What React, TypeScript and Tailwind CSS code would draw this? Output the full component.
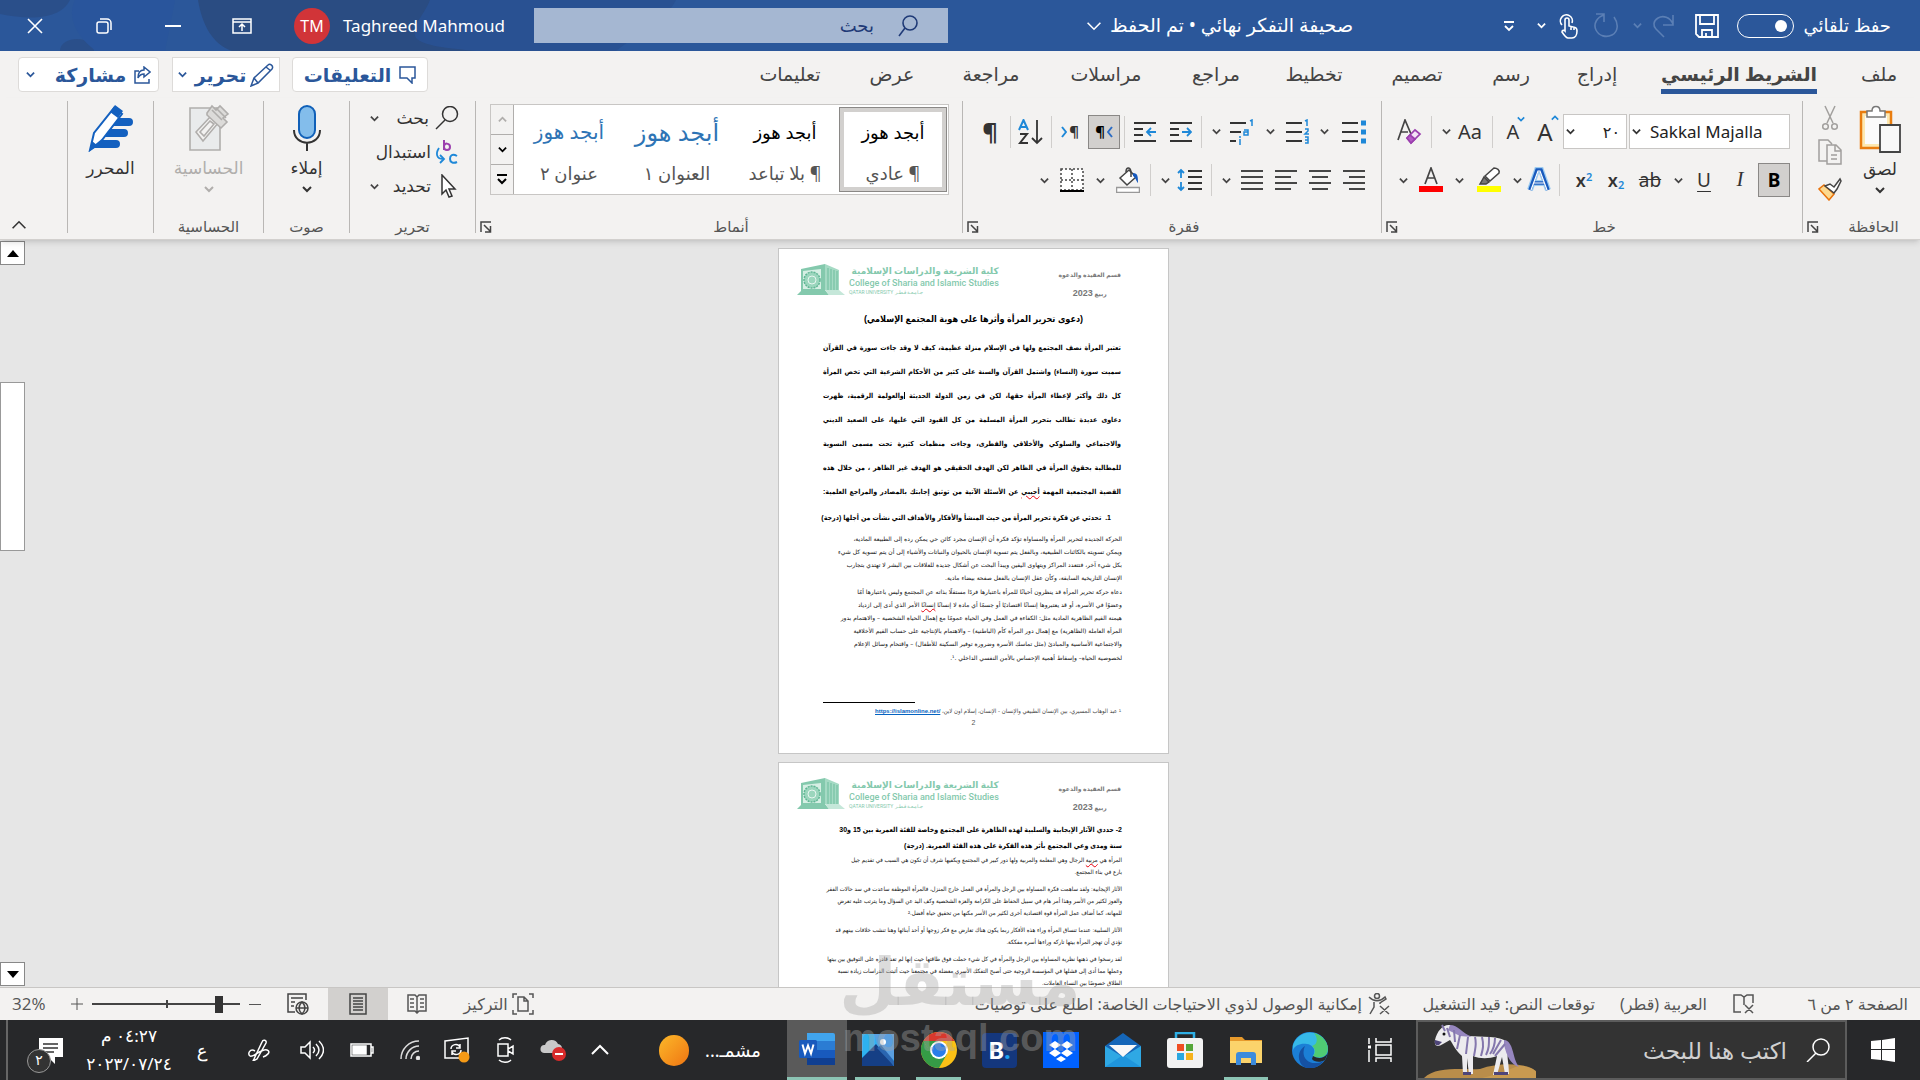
import type { ReactNode } from 'react';

const tabs = [
  { label: 'ملف', width: 'w-[82px]' },
  { label: 'الشريط الرئيسي', width: 'w-[198px]', active: true },
  { label: 'إدراج', width: 'w-[86px]' },
  { label: 'رسم', width: 'w-[86px]' },
  { label: 'تصميم', width: 'w-[102px]' },
  { label: 'تخطيط', width: 'w-[104px]' },
  { label: 'مراجع', width: 'w-[92px]' },
  { label: 'مراسلات', width: 'w-[128px]' },
  { label: 'مراجعة', width: 'w-[102px]' },
  { label: 'عرض', width: 'w-[96px]' },
  { label: 'تعليمات', width: 'w-[108px]' },
];

const gallery = [
  { name: '¶ عادي', preview: 'text-black text-[18px]', selected: true },
  { name: '¶ بلا تباعد', preview: 'text-black text-[18px]' },
  { name: 'العنوان ١', preview: 'text-[#2e74b5] text-[24px]' },
  { name: 'عنوان ٢', preview: 'text-[#2e74b5] text-[20px]' },
];

function Chevron({ className = 'text-[#444]', size = 9, thin }: { className?: string; size?: number; thin?: boolean }) {
  return (
    <svg className={className} width={size} height={size} viewBox="0 0 10 10" fill="none" stroke="currentColor" strokeWidth={thin ? 1 : 2}>
      <path d="M1 3l4 4 4-4" />
    </svg>
  );
}

function Tool({ label, width = 'w-8', children }: { label: string; width?: string; children: ReactNode }) {
  return (
    <button aria-label={label} className={`${width} h-[34px] shrink-0 flex items-center justify-center`}>
      {children}
    </button>
  );
}

function More({ width = 'w-4' }: { width?: string }) {
  return <Tool label="خيارات إضافية" width={width}><Chevron /></Tool>;
}

function Sep({ className = 'mx-1.5' }: { className?: string }) {
  return <span className={`w-px h-8 shrink-0 bg-[#d0cecc] ${className}`} />;
}

function Launcher() {
  return (
    <button aria-label="إعدادات" className="absolute left-1 bottom-0">
      <svg width="12" height="12" viewBox="0 0 12 12" fill="none" stroke="#444" strokeWidth="1.5">
        <path d="M1 11V1h10M4 4l6 6M10.500 5v6H5" />
      </svg>
    </button>
  );
}

function Group({ label, width, launcher, children }: { label: string; width: string; launcher?: boolean; children: ReactNode }) {
  return (
    <section className={`${width} relative shrink-0 flex flex-col border-l border-[#b9b7b5]`}>
      <div className="flex-1">{children}</div>
      <div className={`h-[14px] flex items-center justify-center text-[15px] leading-[14px] text-[#555] ${launcher ? 'pl-6' : ''}`}>
        {label}
      </div>
      {launcher && <Launcher />}
    </section>
  );
}

function Lines({ widths, align }: { widths: number[]; align: 'start' | 'mid' | 'end' }) {
  return (
    <svg width="22" height="22" viewBox="0 0 22 22" stroke="#333" strokeWidth="1.800">
      {widths.map((w, i) => {
        const x = align === 'start' ? 0 : align === 'end' ? 22 - w : (22 - w) / 2;
        return <path key={i} d={`M${x} ${2 + i * 6}h${w}`} />;
      })}
    </svg>
  );
}

function TitleBar() {
  return (
    <header className="relative h-[51px] shrink-0 bg-[#2b579a] text-white">
      <svg className="absolute left-0 top-0" width="720" height="51" viewBox="0 0 720 51" preserveAspectRatio="none">
        <path d="M198 0c4 24 14 44 34 51h330c50-8 30-34 48-51z" fill="#2a4c82" />
        <path d="M430 0c-6 16-20 26-14 38 8 8 30 10 60 13h140c20-16 50-30 60-51z" fill="#295192" />
        <path d="M60 51c0-16 34-16 34 0zM0 0h70c-10 20-40 20-70 14z" fill="#2a4f8a" />
        <path d="M75 0h100l-10 51H96C78 38 66 18 75 0z" fill="#29559c" />
      </svg>
      <div className="relative h-full flex items-center pr-[29px]">
        <label htmlFor="autosave" className="w-[88px] text-[18px] whitespace-nowrap">حفظ تلقائي</label>
        <input
          id="autosave"
          type="checkbox"
          className="mr-[9px] appearance-none w-[57px] h-6 rounded-full border border-white flex items-center px-1.5 before:block before:w-3 before:h-3 before:rounded-full before:bg-white"
        />
        <button aria-label="حفظ" className="mr-[18px]">
          <svg width="24" height="24" viewBox="0 0 24 24" fill="none" stroke="#fff" strokeWidth="1.800">
            <path d="M1 1h22v22H4l-3-3zM5 1v9h14V1M7 23v-7h10v7M11 19v4" />
          </svg>
        </button>
        <button aria-label="تراجع" className="mr-[19px]">
          <svg width="24" height="24" viewBox="0 0 24 24" fill="none" stroke="#5b7fb5" strokeWidth="1.600">
            <path d="M21 1v10H11M21 10C18 3 11 1 6 4s-5 8-2 11l8 8" />
          </svg>
        </button>
        <button aria-label="خيارات التراجع" className="mr-[10px]"><Chevron className="text-[#5b7fb5]" /></button>
        <button aria-label="تكرار" className="mr-[14px]">
          <svg width="26" height="26" viewBox="0 0 26 26" fill="none" stroke="#5b7fb5" strokeWidth="1.600">
            <path d="M3 1h8v8M11 2C4 4 0 11 3 17s10 8 16 5 7-11 2-18" />
          </svg>
        </button>
        <button aria-label="وضع اللمس" className="mr-[14px]">
          <svg width="20" height="26" viewBox="0 0 20 26" fill="none" stroke="#fff" strokeWidth="1.600">
            <path d="M3 12a6 6 0 1 1 10-2" />
            <path d="M6 18V7a2 2 0 0 1 4 0v6l6 1.500c2 .5 2 2 2 3.500 0 4-2 7-5 7H9c-2 0-4-3-6-6 0-2 2-2 3-1zM12 14v3M15 15v2" />
          </svg>
        </button>
        <button aria-label="خيارات اللمس" className="mr-[13px]"><Chevron className="text-white" /></button>
        <button aria-label="تخصيص شريط الأدوات" className="mr-[22px]">
          <svg width="12" height="12" viewBox="0 0 12 12" fill="none" stroke="#fff" strokeWidth="1.800">
            <path d="M1 2h10M2 6l4 4 4-4" />
          </svg>
        </button>
        <div className="flex-1 flex items-center justify-center gap-2 pr-3 text-[19px]">
          <span className="whitespace-nowrap">صحيفة التفكر نهائي • تم الحفظ</span>
          <Chevron className="text-white" size={16} thin />
        </div>
        <div className="w-[414px] h-[35px] shrink-0 bg-[#a5b7d2] flex items-center pr-[30px] gap-[24px]">
          <svg width="20" height="22" viewBox="0 0 20 22" fill="none" stroke="#1f3a77" strokeWidth="1.600">
            <circle cx="12" cy="8" r="7" /><path d="M7 13l-6 8" />
          </svg>
          <input aria-label="بحث" placeholder="بحث" className="flex-1 min-w-0 bg-transparent text-[18px] outline-none placeholder:text-[#1f3a77]" />
        </div>
        <span dir="ltr" className="w-[191px] text-[17px] whitespace-nowrap">Taghreed Mahmoud</span>
        <span className="w-9 h-9 ml-[18px] mr-[13px] rounded-full bg-[#d13438] flex items-center justify-center text-[16px]">TM</span>
        <div className="flex h-full">
          <button aria-label="خيارات عرض الشريط" className="w-[69px] flex items-center justify-center">
            <svg width="20" height="16" viewBox="0 0 20 16" fill="none" stroke="#fff" strokeWidth="1.500">
              <path d="M1 1h18v14H1zM1 4h18M10 13V7M7 9l3-3 3 3" />
            </svg>
          </button>
          <button aria-label="تصغير" className="w-[69px] flex items-center justify-center">
            <span className="w-4 h-0.5 bg-white" />
          </button>
          <button aria-label="استعادة" className="w-[69px] flex items-center justify-center">
            <svg width="16" height="16" viewBox="0 0 16 16" fill="none" stroke="#fff" strokeWidth="1.500">
              <rect x="1" y="4" width="11" height="11" rx="2" /><path d="M4 1h7a4 4 0 0 1 4 4v7" />
            </svg>
          </button>
          <button aria-label="إغلاق" className="w-[69px] flex items-center justify-center">
            <svg width="16" height="16" viewBox="0 0 16 16" stroke="#fff" strokeWidth="1.600"><path d="M1 1l14 14M15 1L1 15" /></svg>
          </button>
        </div>
      </div>
    </header>
  );
}

function TabRow() {
  return (
    <div className="h-[47px] shrink-0 flex items-center">
      <nav className="flex">
        {tabs.map((t) => (
          <a key={t.label} href="#" className={`${t.width} flex justify-center whitespace-nowrap text-[#444]`}>
            <span className={`h-[38px] pt-0.5 text-[19px] leading-8 ${t.active ? 'border-b-[5px] border-[#2b579a] font-bold' : ''}`}>
              {t.label}
            </span>
          </a>
        ))}
      </nav>
      <div className="mr-auto pl-[18px] flex items-center text-[19px] leading-7 font-bold text-[#2b579a]">
        <button className="w-[136px] h-[35px] rounded border border-[#dddbd9] bg-white flex items-center justify-center gap-2">
          <svg width="17" height="18" viewBox="0 0 17 18" fill="none" stroke="currentColor" strokeWidth="1.500">
            <path d="M1 1h15v11h-3v5l-5-5H1z" />
          </svg>
          التعليقات
        </button>
        <button className="w-[108px] h-[35px] mr-3 border border-[#dddbd9] bg-white flex items-center justify-center gap-1">
          <svg width="24" height="24" viewBox="0 0 24 24" fill="none" stroke="currentColor" strokeWidth="1.500">
            <path d="M1 23l3-8L18 2c2-2 6 1 4 4L8 20zM4 15l4 5M16 4l5 4" />
          </svg>
          تحرير
          <Chevron className="mr-1" />
        </button>
        <button className="w-[141px] h-[35px] mr-[13px] rounded border border-[#dddbd9] bg-white flex items-center justify-center gap-2">
          <svg width="17" height="18" viewBox="0 0 17 18" fill="none" stroke="currentColor" strokeWidth="1.500">
            <path d="M5 5H1v12h14v-4M10 1l6 5-6 5V8C6 8 5 10 4 12c0-5 2-8 6-8z" />
          </svg>
          مشاركة
          <Chevron className="mr-3" />
        </button>
      </div>
    </div>
  );
}

function ClipboardGroup() {
  return (
    <Group label="الحافظة" width="w-[118px]" launcher>
      <div className="flex pr-[18px] pt-1">
        <button className="w-11 flex flex-col items-center text-[17px] text-[#333]">
          <svg width="42" height="48" viewBox="0 0 42 48" fill="none">
            <path d="M2 7h30v36H2z" fill="#fde8b0" stroke="#e97d0f" strokeWidth="2.500" />
            <path d="M6 11h22v28H6z" fill="#fbfbfb" />
            <path d="M8 12V6h5c0-6 8-6 8 0h5v6z" fill="#fff" stroke="#777" strokeWidth="1.500" />
            <path d="M21 20h20v27H21z" fill="#f8f8f8" stroke="#444" strokeWidth="1.800" />
          </svg>
          <span className="leading-6 pt-1">لصق</span>
          <Chevron className="mt-1" size={10} />
        </button>
        <div className="mr-4 flex flex-col gap-2 items-center">
          <button aria-label="قص">
            <svg width="16" height="26" viewBox="0 0 16 26" fill="none" stroke="#a19f9d" strokeWidth="1.500">
              <path d="M3 1l8 17M13 1L5 18" /><circle cx="3.500" cy="21.500" r="2.800" /><circle cx="12.500" cy="21.500" r="2.800" />
            </svg>
          </button>
          <button aria-label="نسخ">
            <svg width="24" height="26" viewBox="0 0 24 26" fill="none" stroke="#a19f9d" strokeWidth="1.500">
              <path d="M9 22H1V1h9l4 4M9 6h9l5 5v14H9zM17 6v6h6M13 16h6M13 20h6" />
            </svg>
          </button>
          <button aria-label="نسخ التنسيق" className="mt-1">
            <svg width="24" height="24" viewBox="0 0 24 24" fill="none" stroke="#444" strokeWidth="1.500">
              <path d="M1 12l10 11 5-6-10-9z" fill="#fcd98f" stroke="#e9730c" /><path d="M7 9l5-2 4 3 6-8 1 2-4 8-3 4z" fill="#fff" />
            </svg>
          </button>
        </div>
      </div>
    </Group>
  );
}

function FontGroup() {
  return (
    <Group label="خط" width="w-[421px]" launcher>
      <div className="pr-3 pt-[13px] flex flex-col gap-[14px] text-[#333]">
        <div className="flex items-center h-[35px]">
          <div className="relative w-[161px] h-[35px]" dir="ltr">
            <select aria-label="الخط" className="appearance-none w-full h-full bg-white border border-[#c8c6c4] pl-5 text-[17px] text-[#222] font-['Noto_Sans']">
              <option>Sakkal Majalla</option>
            </select>
            <Chevron className="absolute left-[3px] top-[13px]" />
          </div>
          <div className="relative w-[64px] h-[35px] mr-0.5">
            <select aria-label="حجم الخط" className="appearance-none w-full h-full bg-white border border-[#c8c6c4] pr-1.5 text-[16px] text-[#222]">
              <option>٢٠</option>
            </select>
            <Chevron className="absolute left-[3px] top-[13px]" />
          </div>
          <Tool label="تكبير الخط" width="w-9">
            <span className="relative text-[24px]">A<Chevron className="absolute -right-1.5 top-0 rotate-180 text-[#1e88d8]" size={8} /></span>
          </Tool>
          <Tool label="تصغير الخط" width="w-7">
            <span className="relative text-[20px]">A<Chevron className="absolute -right-1.5 -top-0.5 text-[#1e88d8]" size={8} /></span>
          </Tool>
          <Sep />
          <Tool label="تغيير حالة الأحرف"><span className="text-[20px]">Aa</span></Tool>
          <More />
          <Sep />
          <Tool label="مسح التنسيق">
            <svg width="26" height="26" viewBox="0 0 26 26" fill="none" stroke="#444" strokeWidth="1.700">
              <path d="M2 21L9 1l6 14M5 13h7" /><path d="M11 19l8-8 5 4-9 9z" fill="#f4e3f6" stroke="#9b3fae" /><path d="M11 19l3-3 5 4-4 4z" fill="#b55cc6" stroke="#9b3fae" />
            </svg>
          </Tool>
        </div>
        <div className="flex items-center">
          <button aria-label="غامق" className="w-8 h-[34px] border border-[#8a8886] bg-[#d2d0ce] font-bold text-[19px] text-black leading-none">B</button>
          <Tool label="مائل" width="w-9"><span className="font-['Liberation_Serif'] italic text-[21px]">I</span></Tool>
          <Tool label="تسطير" width="w-9"><span className="underline underline-offset-4 decoration-1 text-[19px]">U</span></Tool>
          <More />
          <Tool label="يتوسطه خط" width="w-10"><span className="line-through text-[19px]">ab</span></Tool>
          <Tool label="منخفض" width="w-7"><span dir="ltr" className="text-[18px] font-semibold">x<sub className="text-[11px] text-[#1e88d8]">2</sub></span></Tool>
          <Tool label="مرتفع" width="w-9"><span dir="ltr" className="text-[18px] font-semibold">x<sup className="text-[11px] text-[#1e88d8]">2</sup></span></Tool>
          <Sep />
          <Tool label="تأثيرات النص" width="w-7">
            <svg width="24" height="26" viewBox="0 0 24 26" fill="none">
              <path d="M3 23L10 3h4l7 20M7 16h10" stroke="#9ccbf0" strokeWidth="6" />
              <path d="M3 23L10 3h4l7 20M7 16h10" stroke="#185abd" strokeWidth="3.500" />
              <path d="M4 23L11 4h2l7 19M7 16h10" stroke="#fff" strokeWidth="1.200" />
            </svg>
          </Tool>
          <More />
          <Tool label="لون تمييز النص" width="w-10">
            <svg width="24" height="26" viewBox="0 0 24 26" fill="none" stroke="#444" strokeWidth="1.500">
              <path d="M0 19h24v6H0z" fill="#ff0" stroke="none" /><path d="M3 17l4-7 5 5-3 2z" fill="#777" /><path d="M8 9l9-8c3 0 6 2 5 5l-9 8z" fill="#fff" />
            </svg>
          </Tool>
          <More width="w-5" />
          <Tool label="لون الخط" width="w-9">
            <svg width="24" height="26" viewBox="0 0 24 26" fill="none" stroke="#444" strokeWidth="1.700">
              <path d="M0 19h24v6H0z" fill="#f00" stroke="none" /><path d="M6 17L12 1l6 16M8 11h8" />
            </svg>
          </Tool>
          <More width="w-5" />
        </div>
      </div>
    </Group>
  );
}

function ParagraphGroup() {
  return (
    <Group label="فقرة" width="w-[419px]" launcher>
      <div className="pr-[11px] pt-[13px] flex flex-col gap-[14px] text-[#333]">
        <div className="flex items-center h-[35px]">
          <Tool label="تعداد نقطي">
            <svg width="24" height="24" viewBox="0 0 24 24" stroke="#333" strokeWidth="1.800">
              <path d="M0 3h16M0 12h16M0 21h16" /><path d="M19 3h5M19 12h5M19 21h5" stroke="#1e88d8" strokeWidth="5" />
            </svg>
          </Tool>
          <More width="w-7" />
          <Tool label="ترقيم" width="w-6">
            <svg width="24" height="26" viewBox="0 0 24 26" stroke="#333" strokeWidth="1.800">
              <path d="M0 4h16M0 13h16M0 22h16" />
              <path d="M19 2l2-1v6M19 10h3v2l-3 3h4M19 18h3v6h-3M19 21h3" stroke="#1e88d8" strokeWidth="1.500" fill="none" />
            </svg>
          </Tool>
          <More width="w-8" />
          <Tool label="قائمة متعددة المستويات" width="w-6">
            <svg width="24" height="26" viewBox="0 0 24 26" stroke="#333" strokeWidth="1.800">
              <path d="M0 4h16M0 13h11M0 22h6" />
              <path d="M20 2l2-1v6M14 11h4v5h-4v-3h4M10 20v6M10 17v2" stroke="#1e88d8" strokeWidth="1.500" fill="none" />
            </svg>
          </Tool>
          <More width="w-7" />
          <Sep className="mx-0" />
          <Tool label="زيادة المسافة" width="w-10">
            <svg width="22" height="22" viewBox="0 0 22 22" fill="none" stroke="#333" strokeWidth="1.800">
              <path d="M0 2h22M0 8h9M0 14h9M0 20h22" /><path d="M12 11h9M17 7l4 4-4 4" stroke="#1e88d8" />
            </svg>
          </Tool>
          <Tool label="إنقاص المسافة">
            <svg width="22" height="22" viewBox="0 0 22 22" fill="none" stroke="#333" strokeWidth="1.800">
              <path d="M0 2h22M0 8h9M0 14h9M0 20h22" /><path d="M22 11h-9M17 7l-4 4 4 4" stroke="#1e88d8" />
            </svg>
          </Tool>
          <Sep className="mx-1" />
          <button dir="ltr" aria-label="من اليمين إلى اليسار" className="w-8 h-[34px] border border-[#8a8886] bg-[#d2d0ce] flex items-center justify-center gap-0.5 text-[15px] font-bold text-black">
            ¶<svg width="6" height="12" viewBox="0 0 6 12" fill="none" stroke="#2b6cc4" strokeWidth="2"><path d="M5 1L1 6l4 5" /></svg>
          </button>
          <Tool label="من اليسار إلى اليمين" width="w-9">
            <span dir="ltr" className="flex items-center gap-0.5 text-[15px] font-bold">
              <svg width="6" height="12" viewBox="0 0 6 12" fill="none" stroke="#1e88d8" strokeWidth="2"><path d="M1 1l4 5-4 5" /></svg>¶
            </span>
          </Tool>
          <Sep className="mx-0" />
          <Tool label="فرز" width="w-10">
            <svg width="26" height="26" viewBox="0 0 26 26" fill="none" strokeWidth="2">
              <path d="M1 11L5.500 1 10 11M3 8h5" stroke="#1e88d8" /><path d="M2 15h7l-7 9h8" stroke="#333" /><path d="M19 1v23M14 19l5 5 5-5" stroke="#333" strokeWidth="1.800" />
            </svg>
          </Tool>
          <Sep className="mx-0" />
          <Tool label="إظهار العلامات" width="w-10"><span className="text-[24px] font-bold">¶</span></Tool>
        </div>
        <div className="flex items-center">
          <Tool label="محاذاة لليمين"><Lines widths={[22, 16, 22, 16]} align="end" /></Tool>
          <Tool label="توسيط" width="w-9"><Lines widths={[22, 16, 22, 16]} align="mid" /></Tool>
          <Tool label="محاذاة لليسار"><Lines widths={[22, 16, 22, 16]} align="start" /></Tool>
          <Tool label="ضبط" width="w-9"><Lines widths={[22, 22, 22, 22]} align="start" /></Tool>
          <More />
          <Sep />
          <Tool label="تباعد الأسطر">
            <svg width="25" height="24" viewBox="0 0 25 24" fill="none" stroke="#333" strokeWidth="1.800">
              <path d="M11 3h14M11 9h14M11 15h14M11 21h14" /><path d="M4 2v8M1 5l3-3 3 3M4 14v8M1 19l3 3 3-3" stroke="#1e88d8" />
            </svg>
          </Tool>
          <More />
          <Sep />
          <Tool label="تظليل">
            <svg width="24" height="26" viewBox="0 0 24 26" fill="none" stroke="#444" strokeWidth="1.500">
              <path d="M.500 20.500h23v5H.500z" fill="#fff" stroke="#999" /><path d="M4 11l9-8 7 7-9 8z" fill="#fff" /><path d="M10 5c0-6 5-5 5 1v4" /><path d="M17 6c5 0 5 4 5 10-2-2-2-5-5-7z" fill="#185abd" stroke="none" />
            </svg>
          </Tool>
          <More width="w-6" />
          <Tool label="حدود">
            <svg width="24" height="24" viewBox="0 0 24 24" fill="none" stroke="#444" strokeWidth="1.500">
              <path d="M1 1h22v21H1z" fill="#fff" strokeDasharray="2 2" /><path d="M12 1v21M1 12h22" strokeDasharray="2 2" /><path d="M0 23h24" stroke="#000" strokeWidth="2" />
            </svg>
          </Tool>
          <More width="w-6" />
        </div>
      </div>
    </Group>
  );
}

function StylesGroup() {
  return (
    <Group label="أنماط" width="w-[487px]" launcher>
      <div className="mt-[3px] mr-[13px] w-[459px] h-[91px] flex border border-[#c8c6c4] bg-white">
        {gallery.map((g) => (
          <button
            key={g.name}
            className={`w-[108px] shrink-0 whitespace-nowrap flex flex-col items-center justify-between ${
              g.selected ? 'my-0.5 mr-px border border-[#8a8886] ring-4 ring-inset ring-[#d2d0ce] pt-2 pb-1' : 'pt-[11px] pb-[7px]'
            }`}
          >
            <span className={`leading-8 ${g.preview}`}>أبجد هوز</span>
            <span className="text-[18px] leading-7 text-[#555]">{g.name}</span>
          </button>
        ))}
        <div className="mr-auto w-[23px] flex flex-col bg-[#f3f2f1] border-r border-[#b0aeac]">
          <button aria-label="لأعلى" className="flex-1 flex items-center justify-center"><Chevron className="rotate-180 text-[#b0aeac]" /></button>
          <button aria-label="لأسفل" className="flex-1 flex items-center justify-center border-y border-[#b0aeac]"><Chevron className="text-black" /></button>
          <button aria-label="المزيد من الأنماط" className="flex-1 flex items-center justify-center">
            <svg width="10" height="11" viewBox="0 0 10 11" fill="none" stroke="#000" strokeWidth="2"><path d="M0 1h10M1 5l4 4 4-4" /></svg>
          </button>
        </div>
      </div>
    </Group>
  );
}

function EditGroup() {
  return (
    <Group label="تحرير" width="w-[126px]">
      <div className="pr-[16px] flex flex-col text-[17px] text-[#333]">
        <button className="h-[34px] flex items-center gap-1.5">
          <svg width="24" height="24" viewBox="0 0 24 24" fill="none" stroke="#333" strokeWidth="1.500"><circle cx="15" cy="8" r="7.500" /><path d="M10 14l-9 9" /></svg>
          بحث
          <span className="mr-auto pl-5"><Chevron /></span>
        </button>
        <button className="h-[34px] flex items-center gap-1">
          <svg width="24" height="26" viewBox="0 0 24 26" fill="none" strokeWidth="2">
            <path d="M9 1v10M9 8c0-5 6-4 6 0s-6 4-6 0" stroke="#9b3fae" /><path d="M22 17c-5-3-7 0-7 3s3 5 7 3" stroke="#1e88d8" /><path d="M4 9c-4 6-2 11 4 11M5 16l4 4-4 4" stroke="#1e88d8" strokeWidth="1.800" />
          </svg>
          استبدال
        </button>
        <button className="h-[34px] flex items-center gap-2">
          <svg width="20" height="24" viewBox="0 0 20 24" fill="#fff" stroke="#333" strokeWidth="1.500"><path d="M3 1v19l4-4 3 7 3-1-3-7h6z" /></svg>
          تحديد
          <span className="mr-auto pl-5"><Chevron /></span>
        </button>
      </div>
    </Group>
  );
}

function BigButton({ label, tone, chevron, icon }: { label: string; tone: string; chevron?: boolean; icon: ReactNode }) {
  return (
    <button className={`w-full flex flex-col items-center pt-[3px] text-[17px] ${tone}`}>
      {icon}
      <span className="leading-6 pt-1">{label}</span>
      {chevron && <Chevron className="mt-1" size={10} />}
    </button>
  );
}

function Ribbon() {
  return (
    <div className="h-[142px] shrink-0 flex pt-[3px] pb-[6px] relative border-b border-[#d2d0ce] shadow-md z-10 bg-[#f3f2f1]">
      <ClipboardGroup />
      <FontGroup />
      <ParagraphGroup />
      <StylesGroup />
      <EditGroup />
      <Group label="صوت" width="w-[86px]">
        <BigButton label="إملاء" tone="text-[#333]" chevron icon={
          <svg width="30" height="48" viewBox="0 0 30 48" fill="none">
            <rect x="7" y="2" width="16" height="32" rx="8" fill="#83bdeb" stroke="#1060b8" strokeWidth="2" /><path d="M2 26c0 17 26 17 26 0M15 39v8" stroke="#333" strokeWidth="2" />
          </svg>
        } />
      </Group>
      <Group label="الحساسية" width="w-[110px]">
        <BigButton label="الحساسية" tone="text-[#b0aeac]" chevron icon={
          <svg width="42" height="48" viewBox="0 0 42 48" fill="none" stroke="#b0aeac" strokeWidth="1.600">
            <path d="M2 4h30v42H2z" fill="#e9ebec" /><path d="M8 28L23 12l8 6-16 19z" fill="#f3f2f1" /><path d="M12 28l10-11 4 3-10 12z" /><path d="M19 9l5-7 4 4 4-4 8 8-5 4 4 4-6 6-14-13z" fill="#dcdbd9" /><path d="M24 6l10 10M28 4l10 10" />
          </svg>
        } />
      </Group>
      <Group label="" width="w-[86px]">
        <BigButton label="المحرر" tone="text-[#333]" icon={
          <svg width="46" height="48" viewBox="0 0 46 48" fill="none">
            <path d="M24 14h17a4 4 0 0 1 0 8H20zM20 25h16a4 4 0 0 1 0 8H14zM14 36h14a4 4 0 0 1 0 8H6z" fill="#1360bf" />
            <path d="M2 46l4-17L26 4l8 6-20 26z" fill="#fff" stroke="#1360bf" strokeWidth="2" /><path d="M22 8l5-7 8 6-5 7zM2 47l2-10 6 5z" fill="#1360bf" />
          </svg>
        } />
      </Group>
      <button aria-label="طي الشريط" className="mr-auto ml-[11px] self-end">
        <Chevron className="rotate-180 text-[#333]" size={16} thin />
      </button>
    </div>
  );
}

function PageHeader() {
  return (
    <div className="h-9 flex justify-between pr-[47px] pl-[18px] shrink-0">
      <div className="flex flex-col items-center pt-0.5 font-['Liberation_Sans','DejaVu_Sans',sans-serif] text-[6px] leading-[18px] font-bold text-[#777] whitespace-nowrap">
        <span>قسم العقيدة والدعوة</span>
        <span>ربيع <span className="text-[9px]">2023</span></span>
      </div>
      <div dir="ltr" className="flex gap-1 text-[#84c9ad]">
        <svg width="48" height="32" viewBox="0 0 48 32">
          <path d="M0 31l4-4V5l24-5v26l4 5z" fill="#84c9ad" /><path d="M6 7l18-2v20H6z" fill="#d6efe4" /><circle cx="15" cy="16" r="8" fill="#9bd6bd" stroke="#60b594" strokeWidth="1.500" strokeDasharray="2 1" />
          <circle cx="15" cy="16" r="4" fill="none" stroke="#e8f6f0" />
          <path d="M28 0l14 6v20H28z" fill="#a5dac4" /><path d="M31 4v22M34 5v21M37 6v20M40 7v19" stroke="#6dbd9d" /><path d="M28 26h14l6 5H32z" fill="#c5e7d9" />
        </svg>
        <div className="whitespace-nowrap">
          <div dir="rtl" className="font-['Noto_Sans','DejaVu_Sans',sans-serif] text-[9px] leading-[13px] font-bold">كلية الشريعة والدراسات الإسلامية</div>
          <div className="font-[Roboto] text-[9px] leading-[12px] font-medium">College of Sharia and Islamic Studies</div>
          <div className="font-[Roboto] text-[5px] leading-[7px]">QATAR UNIVERSITY جـامـعـة قـطـر</div>
        </div>
      </div>
    </div>
  );
}

function Wavy({ children }: { children: ReactNode }) {
  return <span className="underline decoration-wavy decoration-red-600 decoration-1">{children}</span>;
}

const intro: ReactNode[] = [
  'تعتبر المرأة نصف المجتمع ولها في الإسلام منزلة عظيمة، كيف لا وقد جاءت سورة في القرآن',
  'سميت سورة (النساء) واشتمل القرآن والسنة على كثير من الأحكام الشرعية التي تخص المرأة',
  <>كل ذلك وأكثر لإعطاء المرأة حقها، لكن في زمن الدولة الحديثة <span className="border-r border-black">والعولمة</span> الرقمية، ظهرت</>,
  'دعاوى عديدة تطالب بتحرير المرأة المسلمة من كل القيود التي عليها، على الصعيد الديني',
  'والاجتماعي والسلوكي والأخلاقي والفطرى، وجاءت منظمات كثيرة تحت مسمى النسوية',
  'للمطالبة بحقوق المرأة في الظاهر لكن الهدف الحقيقي هو الهدف غير الظاهر ، من خلال هذه',
  <>القضية المجتمعية المهمة <Wavy>أجيبي</Wavy> عن الأسئلة الآتية من توثيق إجابتك بالمصادر والمراجع العلمية:</>,
];

const answerOne: ReactNode[] = [
  'الحركة الجديدة لتحرير المرأة والمساواة تؤكد فكرة أن الإنسان مجرد كائن حي يمكن رده إلى الطبيعة المادية،',
  'ويمكن تسويته بالكائنات الطبيعية، وبالفعل يتم تسوية الإنسان بالحيوان والنباتات والأشياء إلى أن يتم تسوية كل شيء',
  'بكل شيء آخر، فتتعدد المراكز ويتهاوى اليقين ويبدأ البحث عن أشكال جديدة للعلاقات بين البشر لا تهتدي بتجارب',
  'الإنسان التاريخية السابقة، وكأن عقل الإنسان بالفعل صفحة بيضاء مادية.',
  'دعاة حركة تحرير المرأة قد ينظرون أحيانًا للمرأة باعتبارها فردًا مستقلًا بذاته عن المجتمع وليس باعتبارها أمًا',
  <>وعضوًا في الأسرة، أو قد يعتبروها إنسانًا اقتصاديًا أو جسمًا أي مادة لا إنسانًا <Wavy>إنسانًا</Wavy> الأمر الذي أدى إلى ازدياد</>,
  'هيمنة القيم الظاهرية المادية مثل: الكفاءة في العمل وفي الحياة عمومًا مع إهمال الحياة الشخصية – والاهتمام بدور',
  'المرأة العاملة (الظاهرية) مع إهمال دور المرأة كأم (الباطنية) – والاهتمام بالإنتاجية على حساب القيم الأخلاقية',
  'والاجتماعية الأساسية والمبادئ (مثل تماسك الأسرة وضرورة توفير السكينة للأطفال) – واقتحام وسائل الإعلام',
  'لخصوصية الحياة– وإسقاط أهمية الإحساس بالأمن النفسي الداخلي .¹.',
];

const answerTwo: ReactNode[][] = [
  [
    <>المرأة هي <Wavy>مربية</Wavy> الرجال وهي المعلمة والمربية ولها دور كبير في المجتمع ويكفيها شرف أن تكون هي السبب في تقديم جيل</>,
    'بارع في بناء المجتمع.',
  ],
  [
    'الآثار الإيجابية: ولقد ساهمت فكرة المساواة بين الرجل والمرأة في العمل خارج المنزل، فالمرأة الموظفة ساعدت في سد حالات الفقر',
    'والعوز لكثير من الأسر وهذا أمر هام في سبيل الحفاظ على الكرامة والعزة الشخصية وكف اليد عن السؤال وما يترتب عليه تعرض',
    'للمهانة، كما أضاف عمل المرأة قوة اقتصادية أخرى لكثير من الأسر مكنها من تحقيق حياة أفضل.²',
  ],
  [
    'الآثار السلبية: عندما تنساق المرأة وراء هذه الأفكار ربما يكون هناك تعارض مع فكر زوجها أو أحد أبنائها وهنا تنشب خلافات بينهم قد',
    'تؤدي أن تهجر المرأة بيتها تاركه وراءها أسره مفككة.',
  ],
  [
    'لقد رسخوا في ذهنها نظرية المساواة بين الرجل والمرأة في كل شيء حملت فوق طاقتها حيث إنها لم تعد قادره على التوفيق بين بيتها',
    'وعملها مما أدى إلى فشلها في المؤسسة الزوجية حتى أصبح التفكك الأسري معضلة في مجتمعنا حيث أثبتت الدراسات زيادة نسبة',
    'الطلاق خصوصًا بين النساء العاملات.',
  ],
];

function Document() {
  return (
    <main className="relative flex-1 min-h-0 overflow-hidden bg-[#e6e6e6] flex flex-row-reverse">
      <div className="w-[25px] shrink-0 flex flex-col pt-px">
        <button aria-label="تمرير لأعلى" className="h-6 border border-[#888] bg-white flex items-center justify-center">
          <svg width="12" height="7" viewBox="0 0 12 7"><path d="M0 7l6-7 6 7z" fill="#000" /></svg>
        </button>
        <div className="grow-[117]" />
        <div className="grow-[168] border border-[#999] bg-white" />
        <div className="grow-[413]" />
        <button aria-label="تمرير لأسفل" className="h-6 mb-px border border-[#888] bg-white flex items-center justify-center">
          <svg width="12" height="7" viewBox="0 0 12 7"><path d="M0 0l6 7 6-7z" fill="#000" /></svg>
        </button>
      </div>
      <div className="flex-1 flex flex-col items-center gap-2 pl-0.5 text-black font-['Liberation_Sans','DejaVu_Sans_Condensed','DejaVu_Sans',sans-serif]">
        <article className="w-[391px] h-[506px] mt-2 shrink-0 bg-white border border-[#c6c6c6] pt-[15px] flex flex-col">
          <PageHeader />
          <h1 className="mt-2.5 text-center text-[9px] leading-[18px] font-bold">(دعوى تحرير المرأة وأثرها على هوية المجتمع الإسلامي)</h1>
          <div className="mt-2 pr-[47px] pl-[44px] text-[7px] leading-6 font-bold">
            {intro.map((line, i) => <p key={i} className="[text-align-last:justify] whitespace-nowrap">{line}</p>)}
          </div>
          <h2 className="mt-1 pr-[57px] text-[7px] leading-[20px] font-bold whitespace-nowrap">1.&nbsp; تحدثي عن فكرة تحرير المرأة من حيث المنشأ والأفكار والأهداف التي نشأت من أجلها (درجة)</h2>
          <div className="mt-1 pr-[46px] font-['DejaVu_Sans',sans-serif] text-[6px] leading-[13px] text-[#111] whitespace-nowrap">
            {answerOne.map((line, i) => <p key={i} className={i === 4 || i === 9 ? 'mt-px' : ''}>{line}</p>)}
          </div>
          <hr className="mt-[38px] mr-auto ml-[44px] w-[92px] border-black" />
          <p className="pr-[47px] text-[6px] leading-4 text-[#444] whitespace-nowrap">
            ¹ عبد الوهاب المسيري، بين الإنسان الطبيعي والإنسان - الإنسان، إسلام اون لاين، <a href="#" dir="ltr" className="font-bold text-[#0563c1] underline">https://islamonline.net/</a>
          </p>
          <p className="text-center text-[7px] leading-[8px] text-[#555]">2</p>
        </article>
        <article className="w-[391px] h-[506px] shrink-0 bg-white border border-[#c6c6c6] pt-[15px] flex flex-col whitespace-nowrap">
          <PageHeader />
          <h2 className="mt-2 pr-[46px] text-[7px] leading-4 font-bold">
            2- حددي الآثار الإيجابية والسلبية لهذه الظاهرة على المجتمع وخاصة للفئة العمرية بين 15 و30<br />
            سنة ومدى وعي المجتمع بأثر هذه الفكرة على هذه الفئة العمرية. (درجة)
          </h2>
          <div className="pr-[46px] flex flex-col gap-[5px] text-[6px] leading-[12px] text-[#111]">
            {answerTwo.map((para, i) => (
              <div key={i}>{para.map((line, j) => <p key={j}>{line}</p>)}</div>
            ))}
          </div>
        </article>
      </div>
    </main>
  );
}

function StatusBar() {
  return (
    <footer className="h-[33px] shrink-0 border-t border-[#c8c6c4] bg-[#f3f2f1] flex items-center pr-3 text-[16px] text-[#555] whitespace-nowrap">
      <button className="w-[101px] text-right">الصفحة ٢ من ٦</button>
      <button aria-label="تدقيق" className="mr-[52px]">
        <svg width="22" height="20" viewBox="0 0 22 20" fill="none" stroke="#555" strokeWidth="1.500">
          <path d="M8 18H1V1h7l3 2 3-2h6v8M11 3v8M12 11l8 8M20 11l-8 8" />
        </svg>
      </button>
      <button className="mr-[26px] w-[86px] text-right">العربية (قطر)</button>
      <button className="mr-[26px] w-[180px] text-right">توقعات النص: قيد التشغيل</button>
      <button className="mr-[25px] flex items-center gap-[6px]">
        <svg width="22" height="22" viewBox="0 0 22 22" fill="none" stroke="#555" strokeWidth="1.500">
          <circle cx="9" cy="3" r="2.500" /><path d="M1 4c5 5 11 5 16 0l1 2-6 4v1M6 9v5l-4 7M12 13l9 8M21 13l-9 8" />
        </svg>
        إمكانية الوصول لذوي الاحتياجات الخاصة: اطلع على توصيات
      </button>
      <div className="mr-auto flex items-center h-full">
        <button className="flex items-center gap-1">
          <svg width="22" height="22" viewBox="0 0 22 22" fill="none" stroke="#555" strokeWidth="1.500">
            <path d="M5 1H1v4M17 1h4v4M1 17v4h4M21 17v4h-4M6 4h6l4 4v10H6zM12 4v4h4" />
          </svg>
          التركيز
        </button>
        <button aria-label="وضع القراءة" className="mr-[18px] w-[58px] flex justify-center">
          <svg width="20" height="20" viewBox="0 0 20 20" fill="none" stroke="#555" strokeWidth="1.500">
            <path d="M1 1h7l2 2 2-2h7v16h-7l-2 2-2-2H1zM10 3v16M3 5h4M3 9h4M3 13h4M13 5h4M13 9h4M13 13h4" />
          </svg>
        </button>
        <button aria-label="تخطيط الطباعة" className="w-[60px] h-full bg-[#d2d0ce] flex items-center justify-center">
          <svg width="18" height="22" viewBox="0 0 18 22" fill="none" stroke="#444" strokeWidth="1.500">
            <path d="M1 1h16v20H1zM4 5h10M4 8h10M4 11h10M4 14h10M4 17h10" />
          </svg>
        </button>
        <button aria-label="تخطيط ويب" className="w-[60px] flex justify-center">
          <svg width="22" height="22" viewBox="0 0 22 22" fill="none" stroke="#444" strokeWidth="1.500">
            <path d="M8 19H1V1h18v6M4 5h12M4 9h4M4 13h3" /><circle cx="15" cy="15" r="6" /><path d="M9 15h12M15 9c-4 4-4 8 0 12 4-4 4-8 0-12z" />
          </svg>
        </button>
        <button aria-label="تصغير العرض" className="mr-[6px] w-[14px] flex justify-center"><span className="w-3 h-px bg-[#555]" /></button>
        <div className="relative w-[148px] mr-2 flex items-center">
          <input
            aria-label="التكبير"
            type="range"
            min="0"
            max="100"
            defaultValue="12"
            className="appearance-none w-full h-0.5 bg-[#444] [&::-webkit-slider-thumb]:appearance-none [&::-webkit-slider-thumb]:w-2 [&::-webkit-slider-thumb]:h-[17px] [&::-webkit-slider-thumb]:bg-[#333]"
          />
          <span className="absolute left-1/2 w-0.5 h-2 bg-[#444]" />
        </div>
        <button aria-label="تكبير العرض" className="mr-2 w-[14px] flex justify-center">
          <svg width="12" height="12" viewBox="0 0 12 12" stroke="#555"><path d="M0 6h12M6 0v12" /></svg>
        </button>
        <button className="mr-[24px] ml-[12px] font-['Open_Sans'] text-[17px]" dir="ltr">32%</button>
      </div>
    </footer>
  );
}

function Zebra() {
  return (
    <svg className="absolute left-1 bottom-0" width="116" height="58" viewBox="0 0 116 58">
      <path d="M2 58C14 46 40 50 58 49c20-7 46-6 56 2v7z" fill="#b98d4a" />
      <path d="M76 54l20-8c8-1 16 2 18 6v6H60z" fill="#cfa053" opacity=".7" />
      <path d="M13 20c2-9 8-16 15-15l12 10c14 3 32 0 42 5l5 12c-3 5 0 8 0 22h-4l-3-17-5 18h-4l4-19c-8 3-17 3-24 0l0 18h-4l-2-16 0 16h-4l-1-18C33 30 31 24 28 20l-7 4c-5 3-9 3-8-4z" fill="#ecebee" />
      <path d="M28 5c8 0 12 8 22 12l-12-1-12-6zM82 20c10 1 8 18 15 27-9-3-12-11-15-22z" fill="#9686bf" />
      <path d="M20 5l3 6M25 8l3 9M32 10l1 12M38 15l-3 14M46 17l-2 17M53 17c2 8 0 12-1 19M60 17c2 8 1 12-1 19M67 17c0 8 0 12-3 18M73 18c0 8-2 12-5 16M79 20l-8 14M83 24l-10 12" stroke="#8477ad" strokeWidth="2" fill="none" />
      <path d="M13 20c-1 4 1 6 4 5l3-3zM41 52h8v3h-8zM72 52h14v3H72z" fill="#4e4579" /><circle cx="22" cy="14" r="1.500" fill="#111" />
    </svg>
  );
}

function TaskApp({ label, width, open, active, children }: { label: string; width: string; open?: boolean; active?: boolean; children: ReactNode }) {
  return (
    <button aria-label={label} className={`${width} h-full shrink-0 relative flex items-center justify-center ${active ? 'bg-[#5a5a5a]' : ''}`}>
      {children}
      {open && <span className={`absolute bottom-0 h-[3px] bg-[#8cc4b4] ${active ? 'inset-x-0' : 'inset-x-2'}`} />}
    </button>
  );
}

function Taskbar() {
  return (
    <div className="h-[60px] shrink-0 bg-[#27282a] flex items-center text-white">
      <button aria-label="ابدأ" className="w-[73px] pr-px flex items-center justify-center">
        <svg width="24" height="24" viewBox="0 0 24 24" fill="#fff"><path d="M0 3l10-1v9H0zM11 2l13-2v11H11zM0 12h10v10L0 21zM11 12h13v12l-13-2z" /></svg>
      </button>
      <div className="relative w-[431px] h-full shrink-0 border-2 border-[#5c5c5c] bg-[#333] flex items-center pr-[15px] gap-[19px]">
        <svg width="24" height="24" viewBox="0 0 24 24" fill="none" stroke="#fff" strokeWidth="1.500"><circle cx="15" cy="9" r="8" /><path d="M10 15l-9 9" /></svg>
        <input aria-label="بحث في ويندوز" placeholder="اكتب هنا للبحث" className="flex-1 min-w-0 bg-transparent text-[23px] outline-none placeholder:text-[#d0d0d0]" />
        <Zebra />
      </div>
      <TaskApp label="عرض المهام" width="w-[72px]">
        <svg width="24" height="24" viewBox="0 0 24 24" fill="none" stroke="#fff" strokeWidth="1.500"><path d="M1 0v6M1 12v12M8 0v4h15V0M8 7h15v10H8zM8 24v-4h15v4" /><path d="M0 9h3" strokeWidth="3" /></svg>
      </TaskApp>
      <TaskApp label="إيدج" width="w-[68px]">
        <svg width="36" height="36" viewBox="0 0 36 36">
          <circle cx="18" cy="18" r="18" fill="#1b7fd6" />
          <path d="M1 13C5 2 15-1 22 1c11 3 16 13 13 20-3 6-11 5-14 3 3-5 1-11-6-12C9 11 3 13 1 18z" fill="#36b9e8" />
          <path d="M22 1c11 3 16 13 13 20-3 6-11 5-14 3 3-4 2-8-1-10 6-2 6-8 2-13z" fill="#4fcb74" />
          <path d="M13 14c-4 8 0 18 12 17 3 0 6-2 7-3-4 8-14 10-20 7C5 30 5 19 13 14z" fill="#1551a3" />
          <path d="M21 24c5 3 11 3 15-3l-3 7c-5 3-11 2-13-1z" fill="#27282a" />
        </svg>
      </TaskApp>
      <TaskApp label="مستكشف الملفات" width="w-[60px]" open>
        <svg width="32" height="30" viewBox="0 0 32 30">
          <path d="M0 2h12l3 3h17v23H0z" fill="#e79a2c" /><path d="M0 6h32v22H0z" fill="#fbd36b" /><path d="M6 30V20a3 3 0 0 1 3-3h14a3 3 0 0 1 3 3v10h-5v-7H11v7z" fill="#3c8bdc" />
        </svg>
      </TaskApp>
      <TaskApp label="المتجر" width="w-[62px]">
        <svg width="36" height="36" viewBox="0 0 36 36">
          <path d="M9 8V1h18v7" fill="none" stroke="#2fb0e6" strokeWidth="2.500" /><rect y="6" width="36" height="30" rx="3" fill="#f2f2f2" />
          <path d="M10 12h7v7h-7z" fill="#f04e23" /><path d="M19 12h7v7h-7z" fill="#55a63a" /><path d="M10 21h7v7h-7z" fill="#2ba8e0" /><path d="M19 21h7v7h-7z" fill="#f6b21b" />
        </svg>
      </TaskApp>
      <TaskApp label="البريد" width="w-[62px]">
        <svg width="36" height="34" viewBox="0 0 36 34"><path d="M0 13L18 0l18 13v21H0z" fill="#1566b8" /><path d="M0 13l18 11 18-11v21H0z" fill="#2fa8e4" /><path d="M0 34l18-12 18 12z" fill="#1f95dc" /><path d="M4 12h28L18 24z" fill="#f8f8f8" /></svg>
      </TaskApp>
      <TaskApp label="دروب بوكس" width="w-[62px]">
        <svg width="36" height="36" viewBox="0 0 36 36"><path d="M0 0h36v36H0z" fill="#0061fe" /><path d="M12 9l6 4-6 4-6-4zM24 9l6 4-6 4-6-4zM12 17l6 4-6 4-6-4zM24 17l6 4-6 4-6-4zM18 24l5 3-5 3-5-3z" fill="#fff" /></svg>
      </TaskApp>
      <TaskApp label="بوكينج" width="w-[61px]">
        <span dir="ltr" className="w-[35px] h-[35px] rounded bg-[#14377d] flex items-center justify-center font-bold text-[24px] leading-none">B<span className="text-[#1ea0f0]">.</span></span>
      </TaskApp>
      <TaskApp label="كروم" width="w-[61px]" open>
        <svg width="36" height="36" viewBox="0 0 36 36">
          <circle cx="18" cy="18" r="18" fill="#fbc116" /><path d="M2.400 9A18 18 0 0 1 33.600 9H18z" fill="#d8382d" /><path d="M2.400 9A18 18 0 0 0 18 36l8-14-16-1z" fill="#359c46" /><path d="M2.400 9L10 22l8-13z" fill="#359c46" />
          <circle cx="18" cy="18" r="9" fill="#fff" /><circle cx="18" cy="18" r="7" fill="#2a7de9" />
        </svg>
      </TaskApp>
      <TaskApp label="الصور" width="w-[61px]" open>
        <svg width="32" height="32" viewBox="0 0 32 32"><path d="M0 0h32v32H0z" fill="#2eb2f0" /><path d="M12 0h20v26L16 13z" fill="#5a9fe0" /><path d="M0 24l14-14 18 22H0z" fill="#153f85" /><path d="M15 14l4-3 13 16v5z" fill="#2a65b0" /><circle cx="21" cy="8" r="3" fill="#fff" /></svg>
      </TaskApp>
      <TaskApp label="وورد" width="w-[60px]" open active>
        <svg width="36" height="34" viewBox="0 0 36 34">
          <path d="M8 0h26a2 2 0 0 1 2 2v6H8z" fill="#41a5ee" /><path d="M8 8h28v9H8z" fill="#2b7cd3" /><path d="M8 17h28v8H8z" fill="#185abd" /><path d="M8 25h28v7H8z" fill="#103f91" />
          <rect y="7" width="18" height="18" rx="1.500" fill="#185abd" /><path d="M3.500 11.500l2.500 9 3-8 3 8 2.500-9" stroke="#fff" strokeWidth="2" fill="none" />
        </svg>
      </TaskApp>
      <button className="mr-[26px] flex items-center gap-4 text-[18px]">
        <span className="w-14 whitespace-nowrap">مشمـ...</span>
        <span className="w-[30px] h-[31px] rounded-full bg-linear-to-br from-[#fbb829] to-[#ee7412]" />
      </button>
      <div className="mr-auto pl-[6px] h-full flex items-center">
        <TaskApp label="إظهار الرموز المخفية" width="w-[48px]"><Chevron className="rotate-180 text-white" size={20} thin /></TaskApp>
        <TaskApp label="ون درايف" width="w-[46px]">
          <svg width="26" height="24" viewBox="0 0 26 24"><path d="M4 15a4 4 0 0 1 1-8 7 7 0 0 1 13-1c5 0 6 9 0 9z" fill="#c8c8c8" /><circle cx="19" cy="16" r="7" fill="#d92b2b" /><path d="M15 16h8" stroke="#fff" strokeWidth="2" /></svg>
        </TaskApp>
        <TaskApp label="الكاميرا" width="w-[49px]">
          <svg width="18" height="26" viewBox="0 0 18 26" fill="none" stroke="#fff" strokeWidth="1.500"><path d="M1 7h10v12H1zM11 12l5-3v8l-5-3M2 3c3-3 9-3 12 0M2 23c3 3 9 3 12 0" /></svg>
        </TaskApp>
        <TaskApp label="تحديث" width="w-[48px]">
          <svg width="26" height="26" viewBox="0 0 26 26" fill="none" stroke="#fff" strokeWidth="1.500"><path d="M1 4l23-3v20H1zM7 12c0-5 7-6 9-2M16 7v4h-4M17 13c0 5-7 6-9 2M8 18v-4h4" /><circle cx="20" cy="20" r="5.500" fill="#f59a16" stroke="none" /></svg>
        </TaskApp>
        <TaskApp label="واي فاي" width="w-[47px]">
          <svg width="20" height="20" viewBox="0 0 20 20" fill="none" stroke="#ddd" strokeWidth="1.500"><path d="M1 19C1 9 9 1 19 1M6 19C6 12 12 6 19 6M11 19c0-5 4-8 8-8" /><circle cx="18" cy="18" r="1.500" fill="#fff" /></svg>
        </TaskApp>
        <TaskApp label="البطارية" width="w-[49px]">
          <svg width="24" height="14" viewBox="0 0 24 14" fill="none" stroke="#fff" strokeWidth="1.500"><path d="M1 1h20v12H1zM21 4h2v6h-2" /><path d="M3 3h13v8H3z" fill="#fff" /></svg>
        </TaskApp>
        <TaskApp label="الصوت" width="w-[51px]">
          <svg width="24" height="20" viewBox="0 0 24 20" fill="none" stroke="#fff" strokeWidth="1.500"><path d="M1 7h4l5-5v16l-5-5H1zM13 7c2 2 2 4 0 6M16 4c4 4 4 8 0 12M19 1c6 6 6 12 0 18" /></svg>
        </TaskApp>
        <TaskApp label="القلم" width="w-[54px]">
          <svg width="22" height="22" viewBox="0 0 22 22" fill="none" stroke="#fff" strokeWidth="1.500"><path d="M6 20L14 3c1-3 5-2 4 1L9 20l-4 2zM7 12c-5-3-8 3-5 5s12-8 17-6-1 6-4 7" /></svg>
        </TaskApp>
        <button className="mr-3 w-9 text-[18px]">ع</button>
        <button className="w-[110px] flex flex-col items-center text-[17px] leading-7 whitespace-nowrap">
          <span>٠٤:٢٧ م</span>
          <span dir="ltr">٢٠٢٣/٠٧/٢٤</span>
        </button>
        <button aria-label="الإشعارات" className="relative mr-[6px] w-[60px] h-full">
          <svg className="absolute left-[31px] top-[18px]" width="24" height="26" viewBox="0 0 24 26"><path d="M0 0h24v19h-8v7l-7-7H0z" fill="#fff" /><path d="M4 6h15M4 10h15M4 14h11" stroke="#333" strokeWidth="1.500" /></svg>
          <span className="absolute left-[19px] top-[29px] w-6 h-6 rounded-full border border-[#999] bg-[#333] text-[14px] leading-5">٢</span>
        </button>
        <span className="w-0.5 h-full bg-[#666]" />
      </div>
    </div>
  );
}

export default function App() {
  return (
    <div dir="rtl" lang="ar" className="relative h-screen flex flex-col overflow-hidden bg-[#f3f2f1] font-['Noto_Sans','DejaVu_Sans',sans-serif]">
      <TitleBar />
      <TabRow />
      <Ribbon />
      <Document />
      <StatusBar />
      <Taskbar />
      {/* Watermark laid over the bottom of the window */}
      <div className="absolute left-[845px] bottom-5 w-[230px] flex flex-col items-center text-[#a8a8a8]/40 font-bold pointer-events-none whitespace-nowrap z-20">
        <span className="text-[66px] leading-[74px]">مستقل</span>
        <span dir="ltr" className="font-['Liberation_Sans'] text-[38px] leading-[44px]">mostaql.com</span>
      </div>
    </div>
  );
}
